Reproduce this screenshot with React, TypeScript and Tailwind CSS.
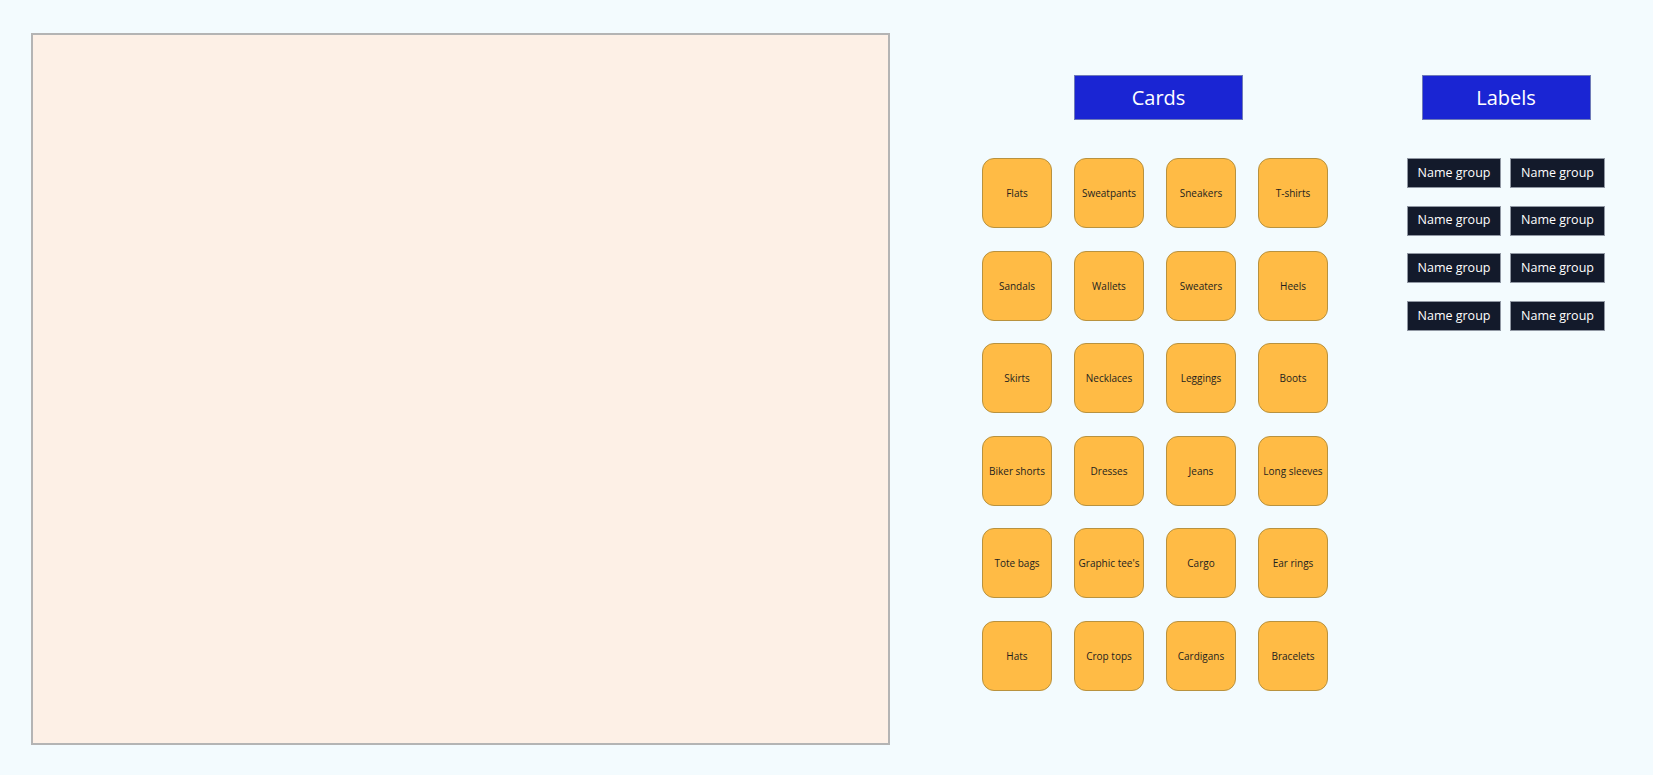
const cards = [
  "Flats",
  "Sweatpants",
  "Sneakers",
  "T-shirts",
  "Sandals",
  "Wallets",
  "Sweaters",
  "Heels",
  "Skirts",
  "Necklaces",
  "Leggings",
  "Boots",
  "Biker shorts",
  "Dresses",
  "Jeans",
  "Long sleeves",
  "Tote bags",
  "Graphic tee's",
  "Cargo",
  "Ear rings",
  "Hats",
  "Crop tops",
  "Cardigans",
  "Bracelets",
];

const labels = Array.from({ length: 8 }, () => "Name group");

function Header({ title, className = "" }: { title: string; className?: string }) {
  return (
    <div
      className={`flex h-[45px] w-[169px] items-center justify-center border border-[#6f7bb8] bg-[#1a25d3] text-[20px] text-white ${className}`}
    >
      {title}
    </div>
  );
}

export default function App() {
  return (
    <div
      className="flex h-[775px] w-[1653px] items-start bg-[#f3fbfe] pl-[31px] pt-[33px]"
      style={{ fontFamily: '"Open Sans", "Noto Sans", sans-serif' }}
    >
      {/* drop zone */}
      <div className="h-[712px] w-[859px] border-2 border-[#b4b4b4] bg-[#fdf0e6]" />

      {/* cards column */}
      <div className="ml-[92px] mt-[42px] flex w-[346px] flex-col items-center">
        <Header title="Cards" className="ml-[7px]" />
        <div className="mt-[38px] grid grid-cols-4 gap-x-[22px] gap-y-[22.6px]">
          {cards.map((c) => (
            <div
              key={c}
              className="flex h-[70px] w-[70px] items-center justify-center rounded-[12px] border border-[#b8923f] bg-[#ffbb45] text-center text-[10px] leading-none text-[#1e1e1e]"
            >
              {c}
            </div>
          ))}
        </div>
      </div>

      {/* labels column */}
      <div className="ml-[79px] mt-[42px] flex w-[198px] flex-col items-center">
        <Header title="Labels" />
        <div className="mt-[38px] grid grid-cols-[94px_95px] gap-x-[9px] gap-y-[17.7px]">
          {labels.map((l, i) => (
            <div
              key={i}
              className="flex h-[30px] items-center justify-center border border-[#9097a3] bg-[#131a2b] text-[12.5px] text-white"
            >
              {l}
            </div>
          ))}
        </div>
      </div>
    </div>
  );
}
